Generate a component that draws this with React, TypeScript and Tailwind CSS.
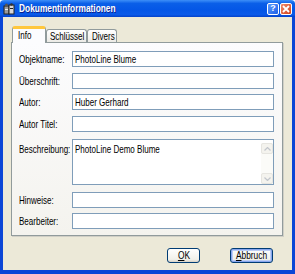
import React from "react";

const font = { fontFamily: '"Liberation Sans", Arial, sans-serif' };

// the reference is squeezed horizontally, so text is narrowed to match
function T({ children, center = false, wide = false }: { children: React.ReactNode; center?: boolean; wide?: boolean }) {
    return (
        <span
            className={`inline-block whitespace-nowrap ${wide ? "scale-x-[0.76]" : "scale-x-[0.73]"} ${center ? "origin-center" : "origin-left"}`}
        >
            {children}
        </span>
    );
}

const rows = [
    { label: "Objektname:", value: "PhotoLine Blume", mt: "mt-0" },
    { label: "Überschrift:", value: "", mt: "mt-[6px]" },
    { label: "Autor:", value: "Huber Gerhard", mt: "mt-[5px]" },
    { label: "Autor Titel:", value: "", mt: "mt-[6px]" },
];

const rowsBottom = [
    { label: "Hinweise:", value: "", mt: "mt-[7px]" },
    { label: "Bearbeiter:", value: "", mt: "mt-[5px]" },
];

function Field({ label, value, mt }: { label: string; value: string; mt: string }) {
    return (
        <div className={`flex h-[16px] items-center leading-[14px] ${mt}`}>
            <span className="w-[53px] shrink-0 text-black">
                <T>{label}</T>
            </span>
            <div className="h-[16px] flex-1 border border-[#7f9db9] bg-white pl-[2px] text-black overflow-hidden">
                <T>{value}</T>
            </div>
        </div>
    );
}

function TitleIcon() {
    return (
        <svg width="12" height="12" viewBox="0 0 12 12">
            <rect x="1" y="3" width="5" height="8" fill="#9a9a9a" stroke="#222" strokeWidth="1" />
            <rect x="6" y="2" width="5" height="9" fill="#d8d8d8" stroke="#222" strokeWidth="1" />
            <circle cx="3.5" cy="2" r="1.6" fill="#555" />
            <circle cx="8.5" cy="1.5" r="1.3" fill="#333" />
            <rect x="7" y="5" width="3" height="1" fill="#222" />
            <rect x="2" y="6" width="3" height="1" fill="#eee" />
        </svg>
    );
}

export default function App() {
    return (
        <div className="w-[295px] h-[274px] flex flex-col text-[11px] select-none" style={font}>
            {/* title bar */}
            <div className="h-[17px] flex items-center px-[3px] rounded-t-[4px] bg-[linear-gradient(180deg,#3d8ff8_0%,#0a5fe8_20%,#0456e6_60%,#0a5ae9_85%,#0442c9_100%)]">
                <TitleIcon />
                <span className="ml-[4px] font-bold text-white [text-shadow:1px_1px_0_#0a1e8c]">
                    <T wide>Dokumentinformationen</T>
                </span>
                <div className="ml-auto flex gap-[1px]">
                    <div className="w-[12px] h-[12px] rounded-[2px] border border-white bg-[linear-gradient(135deg,#5c9bff,#1e5fe6)] flex items-center justify-center text-white text-[9px] font-bold leading-none">
                        ?
                    </div>
                    <div className="w-[12px] h-[12px] rounded-[2px] border border-white bg-[linear-gradient(135deg,#f08a6a,#d3421c)] flex items-center justify-center">
                        <svg width="8" height="8" viewBox="0 0 8 8">
                            <path d="M1 1 L7 7 M7 1 L1 7" stroke="white" strokeWidth="1.8" />
                        </svg>
                    </div>
                </div>
            </div>

            {/* body */}
            <div className="flex-1 flex flex-col bg-[#ece9d8] border-x-[3px] border-b-[4px] border-[#0b46d6] pl-[8px] pr-[9px] pt-[9px]">
                {/* tabs */}
                <div className="flex items-end h-[16px] relative z-10 pl-[1px]">
                    <div className="h-[17px] w-[34px] -mb-[1px] rounded-t-[3px] border-x border-[#919b9c] border-t-[3px] border-t-[#ffc73c] bg-[#fcfcfe] pl-[5px] leading-[12px] text-black">
                        <T>Info</T>
                    </div>
                    <div className="h-[13px] w-[41px] rounded-t-[3px] border border-[#919b9c] border-b-0 bg-[linear-gradient(180deg,#ffffff,#ecebe6)] pl-[3px] leading-[12px] text-black">
                        <T>Schlüssel</T>
                    </div>
                    <div className="h-[13px] w-[30px] rounded-t-[3px] border border-[#919b9c] border-b-0 bg-[linear-gradient(180deg,#ffffff,#ecebe6)] pl-[4px] leading-[12px] text-black">
                        <T>Divers</T>
                    </div>
                </div>

                {/* panel */}
                <div className="h-[194px] w-[272px] border border-[#919b9c] bg-[linear-gradient(180deg,#fcfcfe,#f4f3ee)] pt-[8px] pl-[7px] pr-[8px] shadow-[1px_1px_0_#d0cfc6]">
                    {rows.map((r) => (
                        <Field key={r.label} {...r} />
                    ))}
                    <div className="flex items-start mt-[7px] leading-[14px]">
                        <span className="w-[53px] shrink-0 pt-[3px] text-black">
                            <T>Beschreibung:</T>
                        </span>
                        <div className="h-[46px] flex-1 flex border border-[#7f9db9] bg-white">
                            <div className="flex-1 pl-[2px] pt-[2px] text-black">
                                <T>PhotoLine Demo Blume</T>
                            </div>
                            <div className="w-[12px] mt-[3px] flex flex-col bg-[#fbfbf8]">
                                <div className="h-[11px] rounded-[2px] border border-[#e6e5e0] bg-[#f4f3ee] flex items-center justify-center">
                                    <svg width="7" height="4" viewBox="0 0 7 4">
                                        <path d="M0.5 3.5 L3.5 0.5 L6.5 3.5" stroke="#c2c6cc" strokeWidth="1.2" fill="none" />
                                    </svg>
                                </div>
                                <div className="flex-1" />
                                <div className="h-[11px] rounded-[2px] border border-[#e6e5e0] bg-[#f4f3ee] flex items-center justify-center">
                                    <svg width="7" height="4" viewBox="0 0 7 4">
                                        <path d="M0.5 0.5 L3.5 3.5 L6.5 0.5" stroke="#c2c6cc" strokeWidth="1.2" fill="none" />
                                    </svg>
                                </div>
                            </div>
                        </div>
                    </div>
                    {rowsBottom.map((r) => (
                        <Field key={r.label} {...r} />
                    ))}
                </div>

                {/* buttons */}
                <div className="flex justify-end mt-[12px] pr-[10px] gap-[30px]">
                    <button className="h-[15px] w-[33px] rounded-[3px] border border-[#003c74] bg-[linear-gradient(180deg,#ffffff,#f0f0ea_80%,#d6d0c5)] text-black leading-none">
                        <T center wide>
                            <span className="underline">O</span>K
                        </T>
                    </button>
                    <button className="h-[15px] w-[43px] rounded-[3px] border border-[#003c74] bg-[linear-gradient(180deg,#ffffff,#f0f0ea_80%,#d6d0c5)] shadow-[inset_0_0_0_1px_#88a6ee,inset_0_0_0_2px_#bccdf5] text-black leading-none">
                        <T center wide>
                            <span className="underline">A</span>bbruch
                        </T>
                    </button>
                </div>
            </div>
        </div>
    );
}
